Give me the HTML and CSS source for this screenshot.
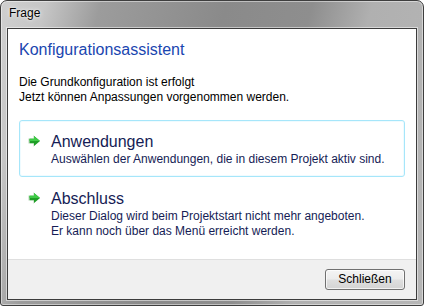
FILE: index.html
```html
<!DOCTYPE html>
<html lang="de">
<head>
<meta charset="utf-8">
<title>Frage</title>
<link rel="stylesheet" href="styles.css">
</head>
<body>
<div class="window">
  <div class="titlebar"><span class="title">Frage</span></div>
  <div class="client">
    <div class="content">
      <h1 class="main">Konfigurationsassistent</h1>
      <p class="intro">Die Grundkonfiguration ist erfolgt<br>Jetzt können Anpassungen vorgenommen werden.</p>
      <div class="links">
        <div class="cmd cmd-hover">
          <svg class="arrow" width="13" height="12" viewBox="0 0 13 12">
            <path d="M0 3.5 H5 V0 L12 6 L5 12 V8.5 H0 Z" fill="#dde9dd"/>
            <path d="M1.5 3.8 H6 V1 L12 6 L6 11 V8.2 H1.5 Z" fill="#1f9e27"/>
            <path d="M6 1 L12 6 H1.5 V3.8 H6 Z" fill="#3fcb47"/>
          </svg>
          <div class="cmd-text">
            <div class="cmd-title">Anwendungen</div>
            <div class="cmd-desc">Auswählen der Anwendungen, die in diesem Projekt aktiv sind.</div>
          </div>
        </div>
        <div class="cmd">
          <svg class="arrow" width="13" height="12" viewBox="0 0 13 12">
            <path d="M0 3.5 H5 V0 L12 6 L5 12 V8.5 H0 Z" fill="#dde9dd"/>
            <path d="M1.5 3.8 H6 V1 L12 6 L6 11 V8.2 H1.5 Z" fill="#1f9e27"/>
            <path d="M6 1 L12 6 H1.5 V3.8 H6 Z" fill="#3fcb47"/>
          </svg>
          <div class="cmd-text">
            <div class="cmd-title">Abschluss</div>
            <div class="cmd-desc">Dieser Dialog wird beim Projektstart nicht mehr angeboten.<br>Er kann noch über das Menü erreicht werden.</div>
          </div>
        </div>
      </div>
    </div>
    <div class="footer">
      <button class="btn">Schließen</button>
    </div>
  </div>
</div>
</body>
</html>
```
FILE: styles.css
```css
* { box-sizing: border-box; }
html, body { margin: 0; padding: 0; }
body {
  font-family: "Liberation Sans", Arial, sans-serif;
  font-size: 12px;
  background: #ffffff;
}
.window {
  width: 424px;
  height: 306px;
  border: 1px solid #3e3e3e;
  border-radius: 7px 7px 3px 3px;
  background: linear-gradient(105deg, #cfcfcf 0%, #c6c6c6 9%, #9c9c9c 20%, #8a8a8a 45%, #8e8e8e 62%, #b0b0b0 74%, #b6b6b6 100%);
  box-shadow: inset 0 0 0 1px rgba(255,255,255,0.45);
  padding: 0 6px 5px 6px;
  display: flex;
  flex-direction: column;
}
.titlebar {
  height: 27px;
  padding: 5px 0 0 2px;
  line-height: 15px;
  flex: none;
}
.title {
  color: #000;
  font-size: 12px;
  text-shadow: 0 0 5px rgba(255,255,255,0.9), 0 0 2px rgba(255,255,255,0.8);
}
.client {
  flex: 1;
  background: #fff;
  border: 1px solid #3c3c3c;
  box-shadow: 0 0 0 1px rgba(255,255,255,0.5);
  display: flex;
  flex-direction: column;
}
.content {
  flex: 1;
  padding: 11px 11px 0 11px;
}
.main {
  margin: 0;
  font-size: 16px;
  line-height: 20px;
  font-weight: normal;
  color: #1a46b0;
}
.intro {
  margin: 15px 0 0 0;
  line-height: 15px;
  color: #000;
}
.links {
  margin-top: 15px;
  display: flex;
  flex-direction: column;
}
.cmd {
  display: flex;
  align-items: flex-start;
  border: 1px solid transparent;
  border-radius: 3px;
  padding: 11px 10px 9px 8px;
}
.cmd-hover {
  border-color: #a6e6fa;
  box-shadow: inset 0 0 0 1px rgba(235,250,255,0.8);
}
.arrow {
  flex: none;
  margin-top: 3px;
  margin-right: 10px;
}
.cmd-title {
  font-size: 16px;
  line-height: 20px;
  color: #151c55;
}
.cmd-desc {
  line-height: 15px;
  color: #151c55;
}
.footer {
  flex: none;
  height: 40px;
  border-top: 1px solid #dfdfdf;
  background: #f0f0f0;
  display: flex;
  justify-content: flex-end;
  align-items: flex-start;
  padding: 9px 11px 0 0;
}
.btn {
  width: 80px;
  height: 21px;
  font-family: "Liberation Sans", Arial, sans-serif;
  font-size: 12px;
  color: #000;
  border: 1px solid #707070;
  border-radius: 3px;
  background: linear-gradient(#f4f4f4 0%, #ececec 48%, #dfdfdf 52%, #d4d4d4 100%);
  box-shadow: inset 0 0 0 1px rgba(255,255,255,0.7);
  padding: 0;
  line-height: 17px;
}
```
